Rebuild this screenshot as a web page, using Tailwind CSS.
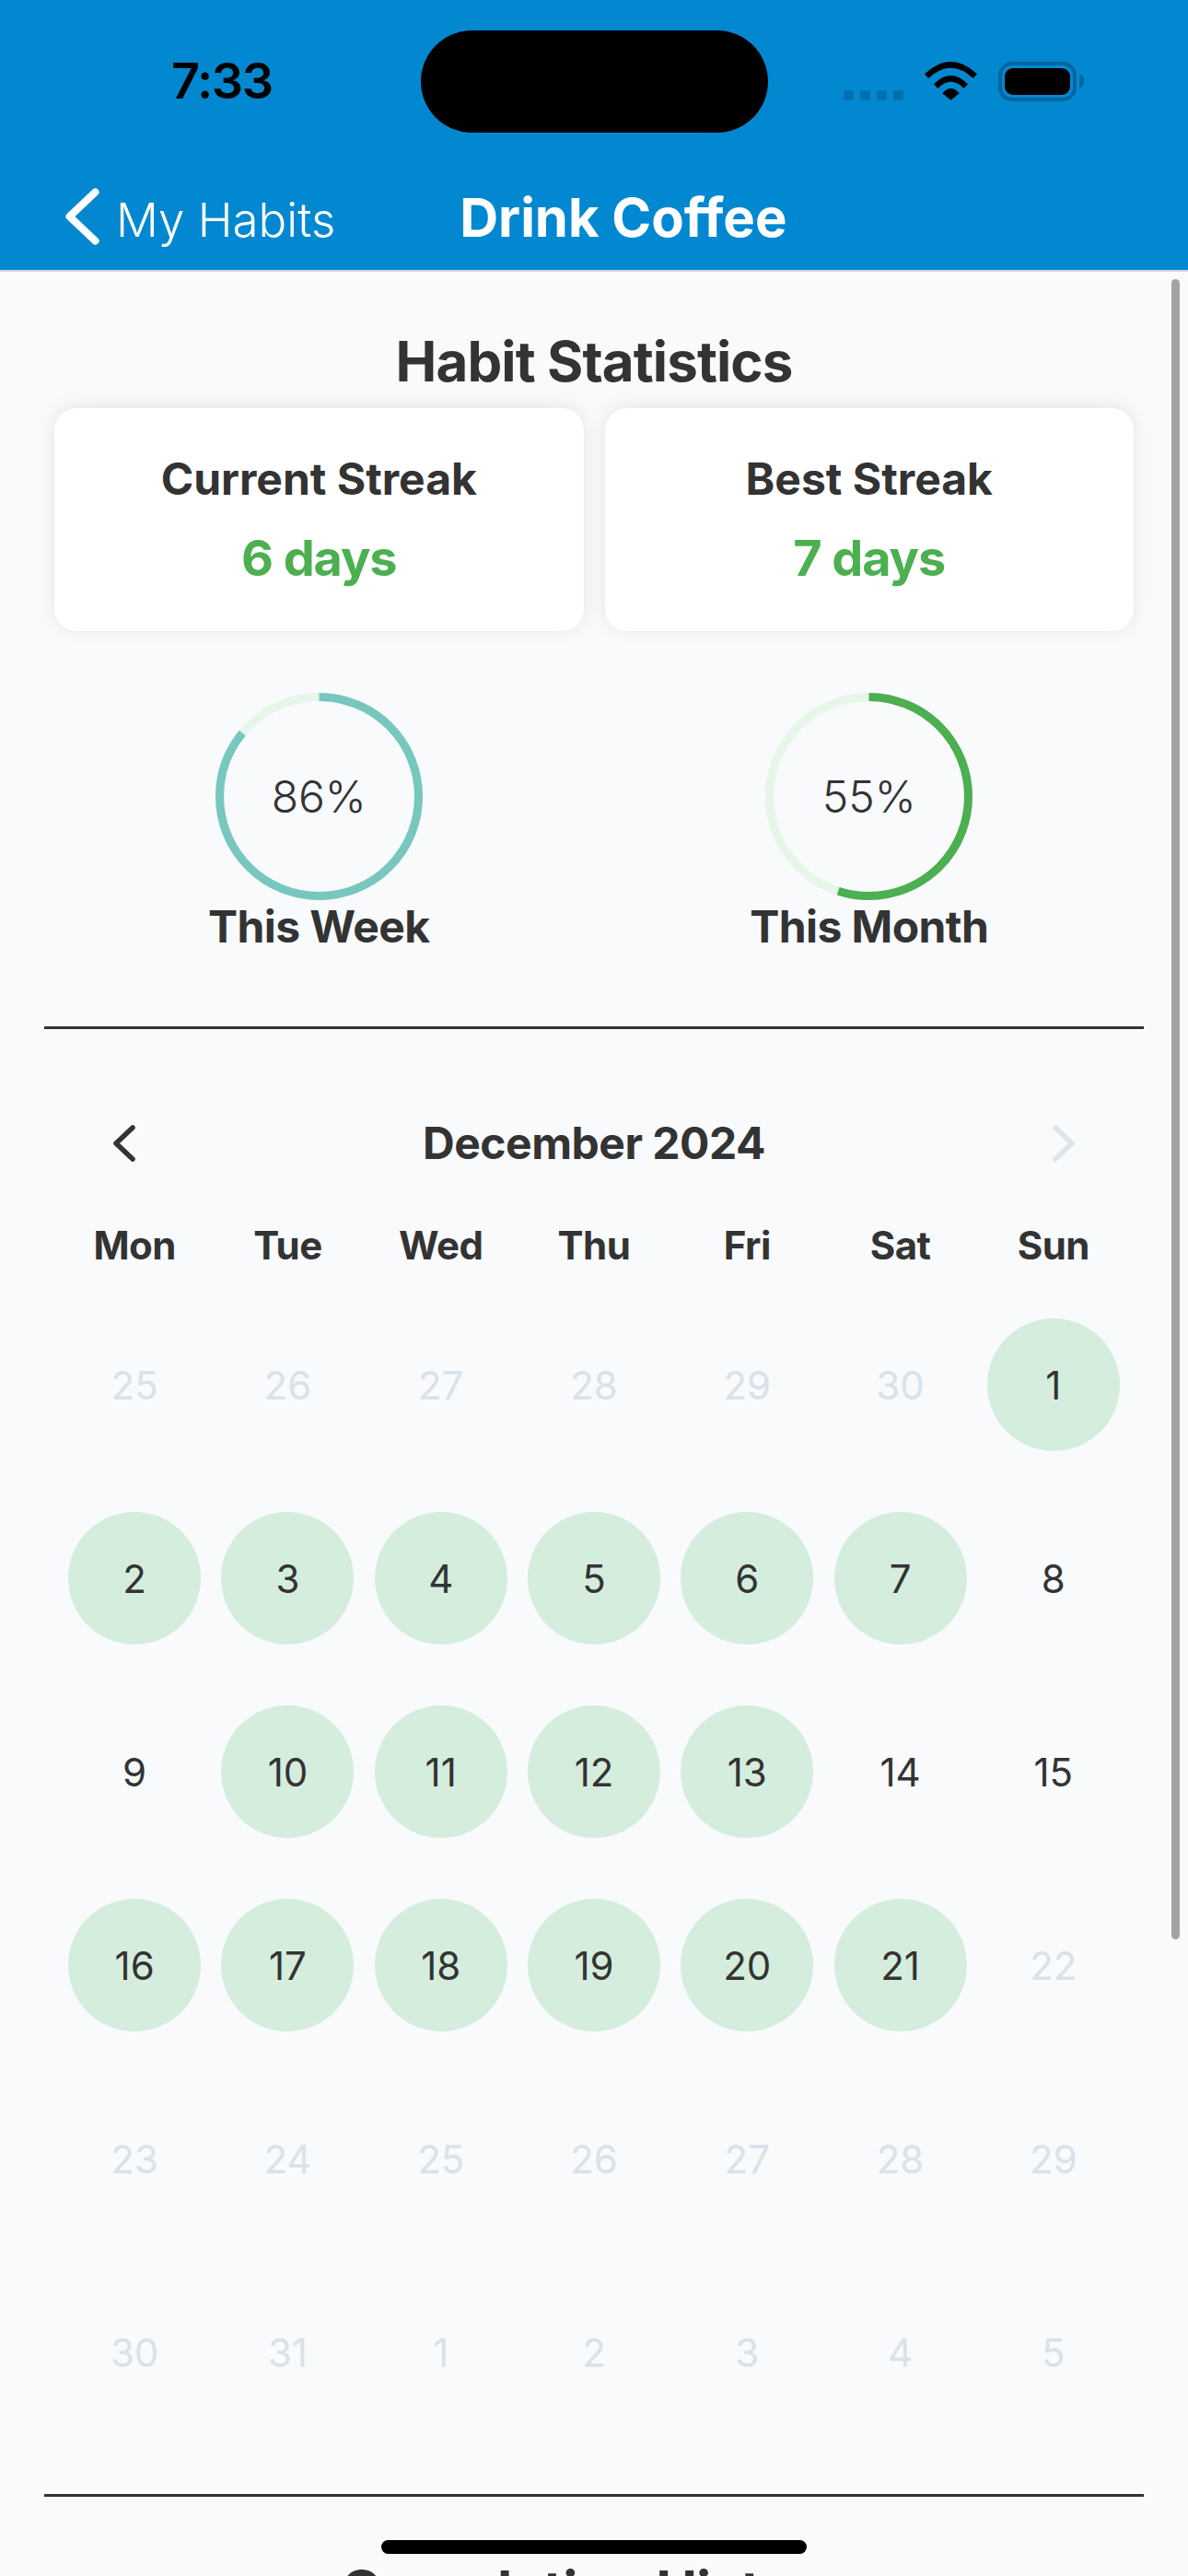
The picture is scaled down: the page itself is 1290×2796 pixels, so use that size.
<!DOCTYPE html>
<html lang="en">
<head>
    <meta charset="UTF-8">
    <meta name="viewport" content="width=device-width, initial-scale=1.0">
    <title>Drink Coffee</title>
    <script src="https://cdn.jsdelivr.net/npm/@tailwindcss/browser@4"></script>
</head>
<body class="font-['Inter',sans-serif] bg-[#f8fafc] text-[#333333]">
<div class="relative w-[1290px] h-[2796px] overflow-hidden">

    <!-- Header -->
    <header class="relative h-[295px] bg-[#0288d1] border-b-2 border-[#d4dadf] text-white">
        <div class="flex items-center justify-between h-[172px] pt-[4px] pl-[186px] pr-[113px]">
            <span class="text-[54px] font-semibold leading-none text-black tracking-tight">7:33</span>
            <div class="flex items-center gap-[23px]">
                <div class="flex items-end gap-[7px] h-[42px]">
                    <span class="w-[11px] h-[11px] rounded-[3px] bg-[#0070ad]"></span>
                    <span class="w-[11px] h-[11px] rounded-[3px] bg-[#0070ad]"></span>
                    <span class="w-[11px] h-[11px] rounded-[3px] bg-[#0070ad]"></span>
                    <span class="w-[11px] h-[11px] rounded-[3px] bg-[#0070ad]"></span>
                </div>
                <svg width="57" height="42" viewBox="0 0 57 42" fill="#000">
                    <path d="M0 13.3Q28.5 -13.3 57 13.3L52.7 18Q28.5 -4.6 4.3 18Z"/>
                    <path d="M10 24.3Q28.5 5.7 47 24.3L42.7 29Q28.5 14.4 14.3 29Z"/>
                    <path d="M19.3 34.3Q28.5 23.7 37.7 34.3L28.5 41.7Z"/>
                </svg>
                <div class="flex items-center">
                    <div class="w-[85px] h-[43px] rounded-[15px] border-[4px] border-[#00659f] p-[3px]">
                        <div class="w-full h-full rounded-[9px] bg-black"></div>
                    </div>
                    <span class="ml-[3px] w-[5px] h-[14px] rounded-r-[5px] bg-[#00659f]"></span>
                </div>
            </div>
        </div>
        <div class="flex items-center h-[121px] pt-[4px]">
            <svg class="ml-[68px]" width="42" height="64" viewBox="0 0 42 64" fill="none" stroke="#fff" stroke-width="8" stroke-linecap="round" stroke-linejoin="round">
                <path d="M35.5 5.5L7.5 32L35.5 58.5"/>
            </svg>
            <div class="flex items-baseline pt-[3px]">
                <span class="ml-[16px] text-[51px] font-light leading-none">My Habits</span>
                <span class="ml-[135px] text-[58px] font-bold leading-none">Drink Coffee</span>
            </div>
        </div>
    </header>

    <!-- Stats -->
    <h2 class="mt-[61px] text-center text-[60px] leading-[72px] font-bold tracking-[-0.015em]">Habit Statistics</h2>
    <div class="grid grid-cols-2 gap-[23px] mt-[15px] mx-[59px]">
        <div class="h-[242px] bg-white rounded-[24px] shadow-[0_-2px_20px_rgba(0,0,0,0.09)] flex flex-col items-center pt-[49px]">
            <span class="text-[48px] leading-[56px] font-bold">Current Streak</span>
            <span class="mt-[28px] text-[54px] leading-[60px] font-bold tracking-[-0.02em] text-[#4caf50]">6 days</span>
        </div>
        <div class="h-[242px] bg-white rounded-[24px] shadow-[0_-2px_20px_rgba(0,0,0,0.09)] flex flex-col items-center pt-[49px]">
            <span class="text-[48px] leading-[56px] font-bold">Best Streak</span>
            <span class="mt-[28px] text-[54px] leading-[60px] font-bold tracking-[-0.02em] text-[#4caf50]">7 days</span>
        </div>
    </div>

    <div class="grid grid-cols-2 gap-[23px] mt-[67px] mx-[59px]">
        <div class="flex flex-col items-center">
            <div class="relative w-[225px] h-[225px]">
                <svg width="225" height="225" viewBox="0 0 225 225" fill="none" stroke-width="9">
                    <circle cx="112.5" cy="112.5" r="108" stroke="#e8f5e9"/>
                    <circle cx="112.5" cy="112.5" r="108" stroke="#77c7be" pathLength="100" stroke-dasharray="86 100" transform="rotate(-90 112.5 112.5)"/>
                </svg>
                <span class="absolute inset-0 flex items-center justify-center text-[48px] font-light">86%</span>
            </div>
            <span class="text-[48px] leading-[60px] font-bold tracking-[-0.012em] -mt-px">This Week</span>
        </div>
        <div class="flex flex-col items-center">
            <div class="relative w-[225px] h-[225px]">
                <svg width="225" height="225" viewBox="0 0 225 225" fill="none" stroke-width="9">
                    <circle cx="112.5" cy="112.5" r="108" stroke="#e8f5e9"/>
                    <circle cx="112.5" cy="112.5" r="108" stroke="#4caf50" pathLength="100" stroke-dasharray="55 100" transform="rotate(-90 112.5 112.5)"/>
                </svg>
                <span class="absolute inset-0 flex items-center justify-center text-[48px] font-light">55%</span>
            </div>
            <span class="text-[48px] leading-[60px] font-bold tracking-[-0.012em] -mt-px">This Month</span>
        </div>
    </div>

    <div class="mx-[48px] mt-[78px] h-[3px] bg-[#333333]"></div>

    <!-- Calendar -->
    <div class="flex items-center justify-between h-[60px] mt-[94px] mx-[123px] text-[48px] font-bold tracking-[-0.01em]">
        <svg width="24" height="40" viewBox="0 0 24 40" fill="none" stroke="#333333" stroke-width="5.5" stroke-linecap="round" stroke-linejoin="round"><path d="M21 3L3 20L21 37"/></svg>
        <span>December 2024</span>
        <svg width="24" height="40" viewBox="0 0 24 40" fill="none" stroke="#dde5ec" stroke-width="5.5" stroke-linecap="round" stroke-linejoin="round"><path d="M3 3L21 20L3 37"/></svg>
    </div>
    <div class="grid grid-cols-7 mx-[63px] mt-[49px] h-[60px] items-center text-center text-[42px] font-bold tracking-[-0.012em]">
        <span>Mon</span><span>Tue</span><span>Wed</span><span>Thu</span><span>Fri</span><span>Sat</span><span>Sun</span>
    </div>
    <div class="grid grid-cols-7 auto-rows-[210px] mx-[63px] mt-[18px] text-[42px] items-center justify-items-center text-[#d9e2ea]">
        <span>25</span><span>26</span><span>27</span><span>28</span><span>29</span><span>30</span>
        <span class="flex items-center justify-center w-[144px] h-[144px] rounded-full bg-[#d4eddd] text-[#333333]">1</span>

        <span class="flex items-center justify-center w-[144px] h-[144px] rounded-full bg-[#d4eddd] text-[#333333]">2</span>
        <span class="flex items-center justify-center w-[144px] h-[144px] rounded-full bg-[#d4eddd] text-[#333333]">3</span>
        <span class="flex items-center justify-center w-[144px] h-[144px] rounded-full bg-[#d4eddd] text-[#333333]">4</span>
        <span class="flex items-center justify-center w-[144px] h-[144px] rounded-full bg-[#d4eddd] text-[#333333]">5</span>
        <span class="flex items-center justify-center w-[144px] h-[144px] rounded-full bg-[#d4eddd] text-[#333333]">6</span>
        <span class="flex items-center justify-center w-[144px] h-[144px] rounded-full bg-[#d4eddd] text-[#333333]">7</span>
        <span class="text-[#333333]">8</span>

        <span class="text-[#333333]">9</span>
        <span class="flex items-center justify-center w-[144px] h-[144px] rounded-full bg-[#d4eddd] text-[#333333]">10</span>
        <span class="flex items-center justify-center w-[144px] h-[144px] rounded-full bg-[#d4eddd] text-[#333333]">11</span>
        <span class="flex items-center justify-center w-[144px] h-[144px] rounded-full bg-[#d4eddd] text-[#333333]">12</span>
        <span class="flex items-center justify-center w-[144px] h-[144px] rounded-full bg-[#d4eddd] text-[#333333]">13</span>
        <span class="text-[#333333]">14</span>
        <span class="text-[#333333]">15</span>

        <span class="flex items-center justify-center w-[144px] h-[144px] rounded-full bg-[#d4eddd] text-[#333333]">16</span>
        <span class="flex items-center justify-center w-[144px] h-[144px] rounded-full bg-[#d4eddd] text-[#333333]">17</span>
        <span class="flex items-center justify-center w-[144px] h-[144px] rounded-full bg-[#d4eddd] text-[#333333]">18</span>
        <span class="flex items-center justify-center w-[144px] h-[144px] rounded-full bg-[#d4eddd] text-[#333333]">19</span>
        <span class="flex items-center justify-center w-[144px] h-[144px] rounded-full bg-[#d4eddd] text-[#333333]">20</span>
        <span class="flex items-center justify-center w-[144px] h-[144px] rounded-full bg-[#d4eddd] text-[#333333]">21</span>
        <span>22</span>

        <span>23</span><span>24</span><span>25</span><span>26</span><span>27</span><span>28</span><span>29</span>
        <span>30</span><span>31</span><span>1</span><span>2</span><span>3</span><span>4</span><span>5</span>
    </div>

    <div class="mx-[48px] mt-[49px] h-[3px] bg-[#333333]"></div>
    <h2 class="mt-[66px] text-center text-[60px] leading-[72px] font-bold tracking-[-0.015em]">Completion History</h2>

    <!-- Overlays -->
    <div class="absolute left-[457px] top-[33px] w-[377px] h-[111px] rounded-[56px] bg-black"></div>
    <div class="absolute left-[1272px] top-[303px] w-[9px] h-[1802px] rounded-full bg-[#a2a4a4]"></div>
    <div class="absolute left-[414px] top-[2757px] w-[462px] h-[15px] rounded-full bg-black"></div>
</div>
</body>
</html>
